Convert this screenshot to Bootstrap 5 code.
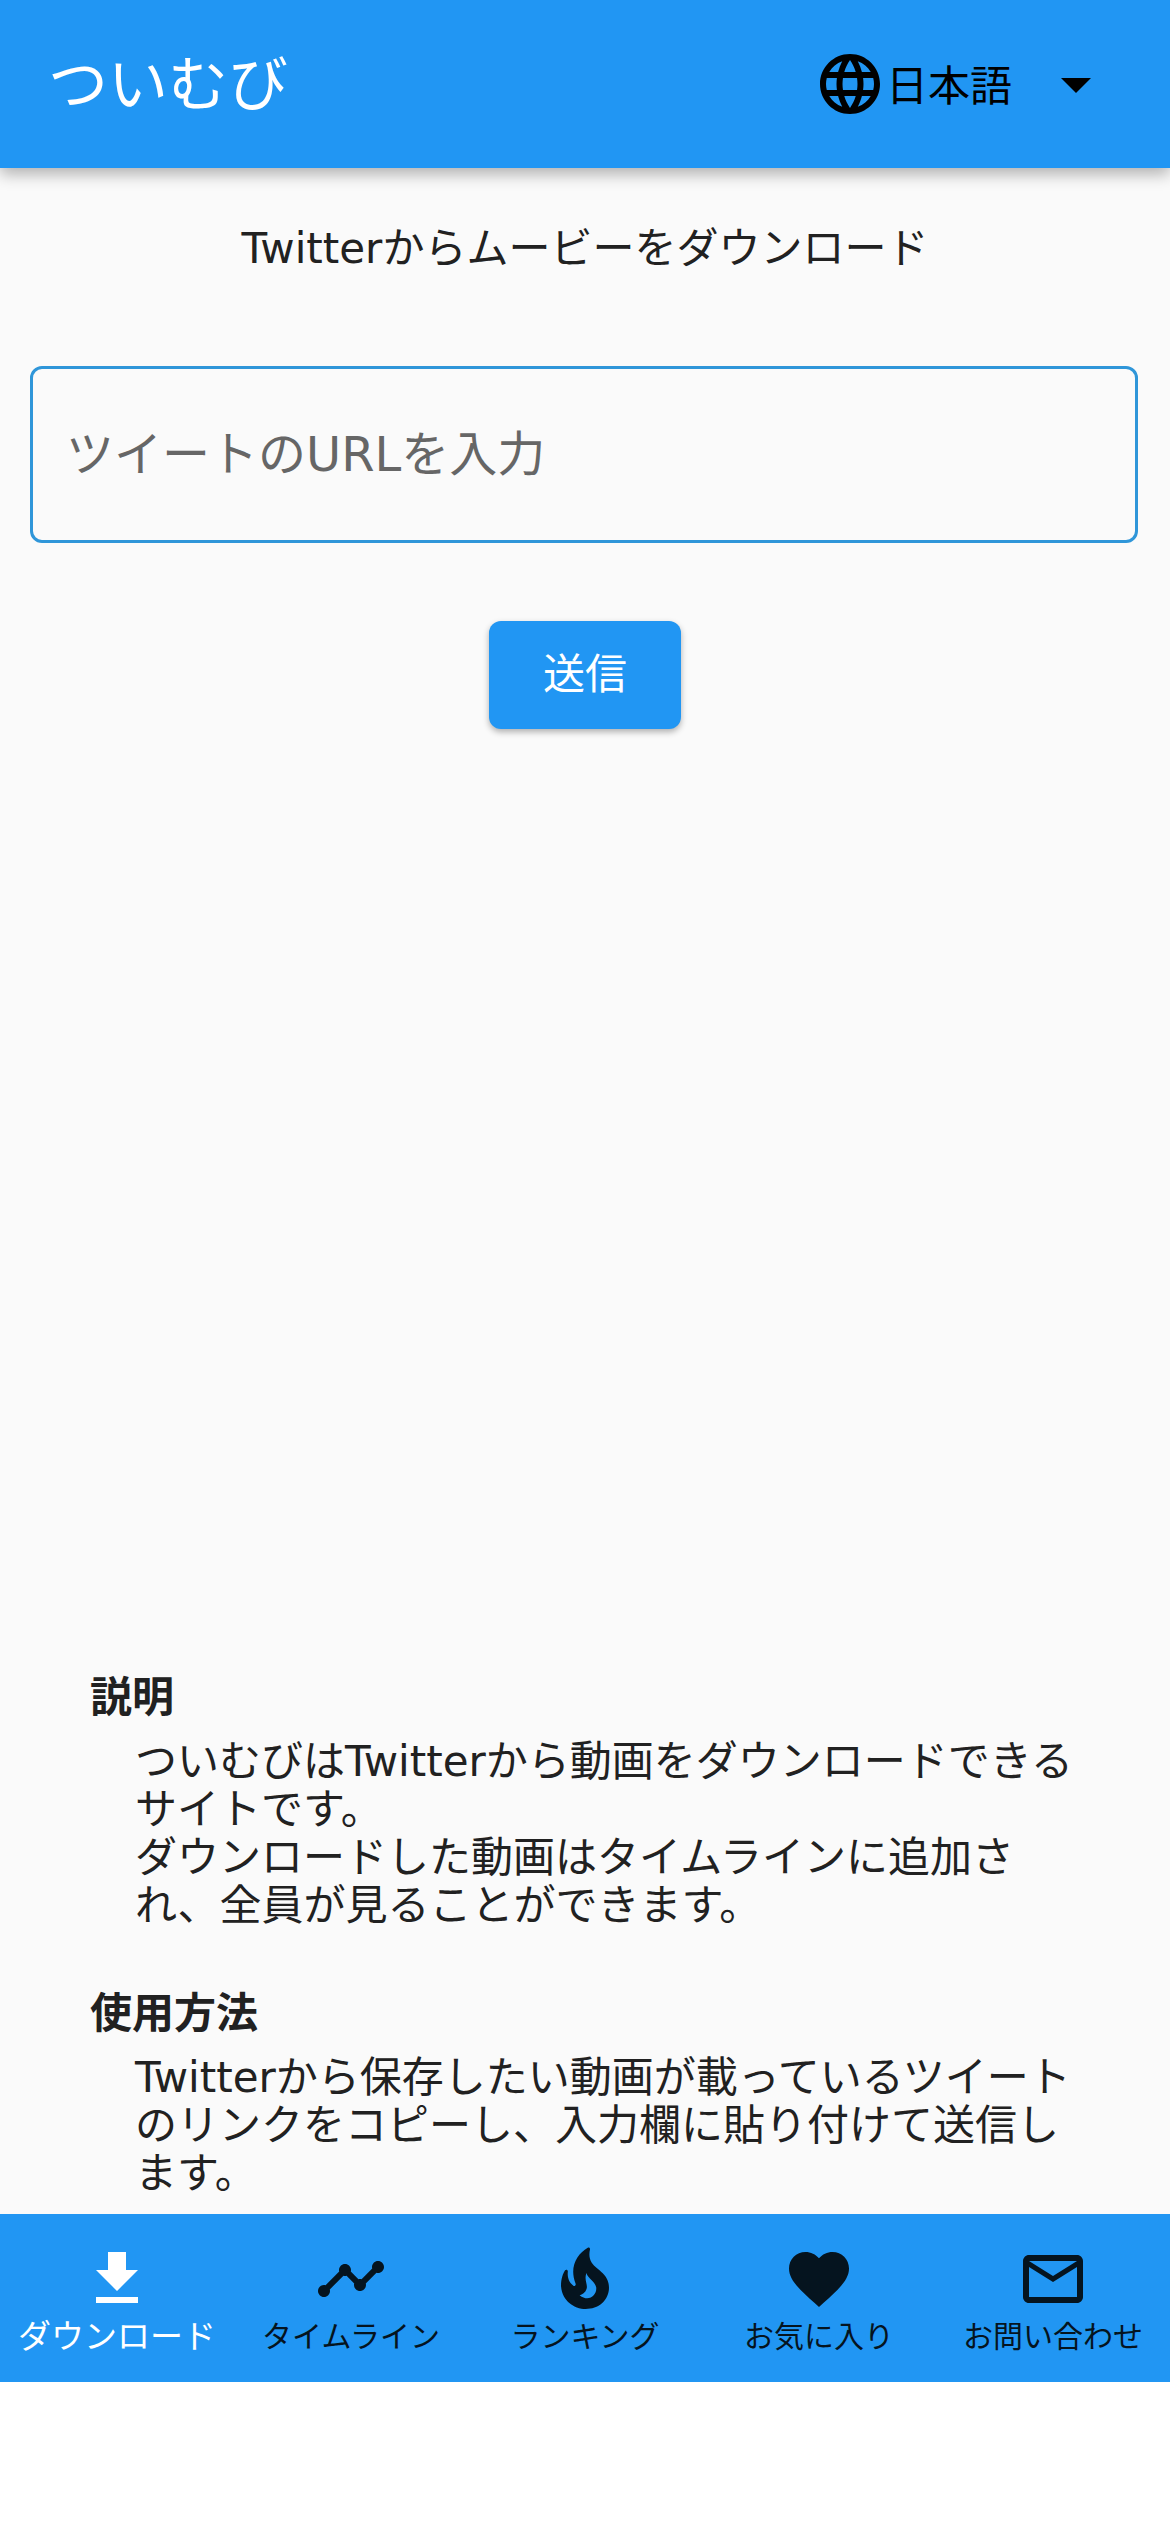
<!DOCTYPE html>
<html lang="ja">
<head>
    <meta charset="UTF-8">
    <title>ついむび</title>
    <link href="https://cdn.jsdelivr.net/npm/bootstrap@5.3.0/dist/css/bootstrap.min.css" rel="stylesheet">
    <style>
        html, body { height: 2532px; }
        body {
            background: #fff;
            font-family: "DejaVu Sans", "Noto Sans CJK JP", sans-serif;
            color: #212121;
            font-size: 42px;
            line-height: 48px;
        }
        .app-frame { height: 2382px; background: #fafafa; }
        .app-bar {
            height: 168px;
            flex: none;
            background: #2196f3;
            padding: 0 58px 0 48px;
            box-shadow: 0 6px 15px rgba(0, 0, 0, .3);
        }
        .app-title { color: #fff; font-size: 60px; line-height: 70px; margin-top: 2px; }
        .lang-pick { color: #000; font-size: 42px; }
        .lang-pick svg { width: 72px; height: 72px; flex: none; }
        .lang-name { width: 154px; margin-top: 6px; }
        .lead-line { margin-top: 57px; height: 48px; }
        .url-box {
            height: 177px;
            margin: 93px 32px 0 30px;
            padding: 0 33px 2px;
            border: 3px solid #2f96d9;
            border-radius: 12px;
            color: #666;
            font-size: 48px;
        }
        .send-btn {
            width: 192px;
            height: 108px;
            margin-top: 78px;
            background: #2196f3;
            border: 0;
            border-radius: 12px;
            color: #fff;
            font-size: 42px;
            box-shadow: 0 3px 6px rgba(0, 0, 0, .3);
        }
        .help-area { padding: 0 0 16px 90px; }
        .help-head { font-weight: 700; font-size: 42px; line-height: 48px; margin: 0; }
        .help-text { margin: 16px 0 0 45px; white-space: nowrap; }
        .help-gap { margin-top: 60px; }
        .tab-bar { height: 168px; flex: none; background: #2196f3; }
        .tab-item { width: 234px; padding-top: 29px; color: #05141f; font-size: 30px; line-height: 36px; }
        .tab-item svg { width: 72px; height: 72px; display: block; }
        .tab-item span { margin-top: 4px; }
        .tab-on { color: #fff; font-size: 33px; }
        .icon-fill { fill: currentColor; }
    </style>
</head>
<body>
<div class="app-frame d-flex flex-column">
    <header class="app-bar d-flex align-items-center justify-content-between">
        <div class="app-title">ついむび</div>
        <div class="lang-pick d-flex align-items-center">
            <svg viewBox="0 0 24 24"><path class="icon-fill" d="M11.99 2C6.47 2 2 6.48 2 12s4.47 10 9.99 10C17.52 22 22 17.52 22 12S17.52 2 11.99 2zm6.93 6h-2.95c-.32-1.25-.78-2.45-1.38-3.56 1.84.63 3.37 1.91 4.33 3.56zM12 4.04c.83 1.2 1.48 2.53 1.91 3.96h-3.82c.43-1.43 1.08-2.76 1.91-3.96zM4.26 14C4.1 13.36 4 12.69 4 12s.1-1.36.26-2h3.38c-.08.66-.14 1.32-.14 2 0 .68.06 1.34.14 2H4.26zm.82 2h2.95c.32 1.25.78 2.45 1.38 3.56-1.84-.63-3.37-1.9-4.33-3.56zm2.95-8H5.08c.96-1.66 2.49-2.93 4.33-3.56C8.81 5.55 8.35 6.75 8.03 8zM12 19.96c-.83-1.2-1.48-2.53-1.91-3.96h3.82c-.43 1.43-1.08 2.76-1.91 3.96zM14.34 14H9.66c-.09-.66-.16-1.32-.16-2 0-.68.07-1.35.16-2h4.68c.09.65.16 1.32.16 2 0 .68-.07 1.34-.16 2zm.25 5.56c.6-1.11 1.06-2.31 1.38-3.56h2.95c-.96 1.65-2.49 2.93-4.33 3.56zM16.36 14c.08-.66.14-1.32.14-2 0-.68-.06-1.34-.14-2h3.38c.16.64.26 1.31.26 2s-.1 1.36-.26 2h-3.38z"/></svg>
            <span class="lang-name">日本語</span>
            <svg viewBox="0 0 24 24"><path class="icon-fill" d="M7 10l5 5 5-5z"/></svg>
        </div>
    </header>

    <main class="flex-grow-1 d-flex flex-column">
        <div class="lead-line text-center">Twitterからムービーをダウンロード</div>
        <div class="url-box d-flex align-items-center">ツイートのURLを入力</div>
        <div class="text-center">
            <button type="button" class="send-btn">送信</button>
        </div>
        <section class="help-area mt-auto">
            <h2 class="help-head">説明</h2>
            <p class="help-text">ついむびはTwitterから動画をダウンロードできる<br>サイトです。<br>ダウンロードした動画はタイムラインに追加さ<br>れ、全員が見ることができます。</p>
            <h2 class="help-head help-gap">使用方法</h2>
            <p class="help-text">Twitterから保存したい動画が載っているツイート<br>のリンクをコピーし、入力欄に貼り付けて送信し<br>ます。</p>
        </section>
    </main>

    <nav class="tab-bar d-flex">
        <div class="tab-item tab-on d-flex flex-column align-items-center">
            <svg viewBox="0 0 24 24"><path class="icon-fill" d="M19 9h-4V3H9v6H5l7 7 7-7zM5 18v2h14v-2H5z"/></svg>
            <span>ダウンロード</span>
        </div>
        <div class="tab-item d-flex flex-column align-items-center">
            <svg viewBox="0 0 24 24"><path class="icon-fill" d="M23 8c0 1.1-.9 2-2 2-.18 0-.35-.02-.51-.07l-3.56 3.55c.05.16.07.34.07.52 0 1.1-.9 2-2 2s-2-.9-2-2c0-.18.02-.36.07-.52l-2.55-2.55c-.16.05-.34.07-.52.07s-.36-.02-.52-.07l-4.55 4.56c.05.16.07.33.07.51 0 1.1-.9 2-2 2s-2-.9-2-2 .9-2 2-2c.18 0 .35.02.51.07l4.56-4.55C8.02 9.36 8 9.18 8 9c0-1.1.9-2 2-2s2 .9 2 2c0 .18-.02.36-.07.52l2.55 2.55c.16-.05.34-.07.52-.07s.36.02.52.07l3.55-3.56C19.02 8.35 19 8.18 19 8c0-1.1.9-2 2-2s2 .9 2 2z"/></svg>
            <span>タイムライン</span>
        </div>
        <div class="tab-item d-flex flex-column align-items-center">
            <svg viewBox="0 0 24 24"><path class="icon-fill" fill-rule="evenodd" d="M19.48 12.35c-1.57-4.08-7.16-4.3-5.81-10.23.1-.44-.37-.78-.75-.55C9.29 3.71 6.68 8 8.87 13.62c.18.46-.36.89-.75.59-1.81-1.37-2-3.34-1.84-4.75.06-.52-.62-.77-.91-.34C4.69 10.16 4 11.84 4 14.37c.38 5.6 5.11 7.32 6.81 7.54 2.43.31 5.06-.14 6.95-1.87 2.08-1.93 2.84-5.01 1.72-7.69zM10.2 17.38c1.44-.35 2.18-1.39 2.38-2.31.33-1.43-.96-2.83-.09-5.09.33 1.87 3.27 3.04 3.27 5.08.08 2.53-2.66 4.7-5.56 2.32z"/></svg>
            <span>ランキング</span>
        </div>
        <div class="tab-item d-flex flex-column align-items-center">
            <svg viewBox="0 0 24 24"><path class="icon-fill" d="M12 21.35l-1.45-1.32C5.4 15.36 2 12.28 2 8.5 2 5.42 4.42 3 7.5 3c1.74 0 3.41.81 4.5 2.09C13.09 3.81 14.76 3 16.5 3 19.58 3 22 5.42 22 8.5c0 3.78-3.4 6.86-8.55 11.54L12 21.35z"/></svg>
            <span>お気に入り</span>
        </div>
        <div class="tab-item d-flex flex-column align-items-center">
            <svg viewBox="0 0 24 24"><path class="icon-fill" d="M20 4H4c-1.1 0-1.99.9-1.99 2L2 18c0 1.1.9 2 2 2h16c1.1 0 2-.9 2-2V6c0-1.1-.9-2-2-2zm0 14H4V8l8 5 8-5v10zm-8-7L4 6h16l-8 5z"/></svg>
            <span>お問い合わせ</span>
        </div>
    </nav>
</div>
<script src="https://cdn.jsdelivr.net/npm/bootstrap@5.3.0/dist/js/bootstrap.bundle.min.js"></script>
</body>
</html>
